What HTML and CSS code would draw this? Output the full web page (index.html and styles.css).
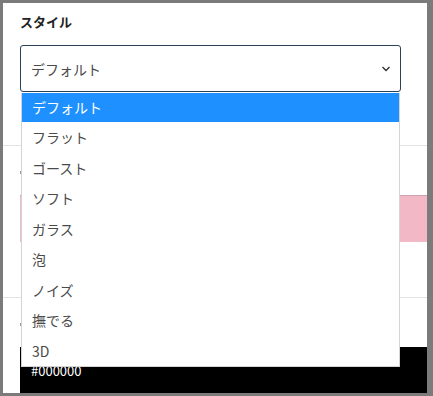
FILE: index.html
```html
<!DOCTYPE html>
<html lang="ja">
<head>
<meta charset="UTF-8">
<meta name="viewport" content="width=device-width, initial-scale=1.0">
<title>スタイル</title>
<link rel="stylesheet" href="styles.css">
</head>
<body>
<div class="frame">
    <div class="top">
        <h2 class="title">スタイル</h2>
        <div class="select">
            <span>デフォルト</span>
            <svg class="chev" width="10" height="6" viewBox="0 0 10 6"><polyline points="1.5,1 5,4.5 8.5,1" fill="none" stroke="#333" stroke-width="1.4"/></svg>
        </div>
    </div>

    <div class="section">
        <div class="mark"></div>
        <div class="swatch pink"></div>
    </div>

    <div class="section">
        <div class="mark"></div>
        <div class="swatch black">#000000</div>
    </div>

    <ul class="menu">
        <li class="active">デフォルト</li>
        <li>フラット</li>
        <li>ゴースト</li>
        <li>ソフト</li>
        <li>ガラス</li>
        <li>泡</li>
        <li>ノイズ</li>
        <li>撫でる</li>
        <li>3D</li>
    </ul>
</div>
</body>
</html>
```

FILE: styles.css
```css
body {
    margin: 0;
    background-color: #7b7b7b;
    font-family: "Noto Sans CJK JP", "Noto Sans", sans-serif;
}

.frame {
    position: relative;
    margin: 3px 6px 3px 3px;
    height: 390px;
    background-color: #fff;
    overflow: hidden;
}

.top {
    padding: 9px 0 53px 17px;
}

.title {
    margin: 0 0 13px;
    font-size: 13px;
    line-height: 20px;
    font-weight: bold;
    color: #222;
}

.select {
    display: flex;
    align-items: center;
    justify-content: space-between;
    width: 381px;
    height: 47px;
    box-sizing: border-box;
    padding: 0 9px 0 10px;
    border: 1.5px solid #2b4157;
    border-radius: 3px;
    font-size: 14px;
    color: #4a4a4a;
}

.section {
    border-top: 1px solid #e2e2e2;
    padding: 25px 0 0 17px;
    height: 152px;
    box-sizing: border-box;
}

.mark {
    width: 2px;
    height: 3px;
    background-color: #999;
}

.swatch {
    margin-top: 21px;
    width: 420px;
    height: 47px;
    box-sizing: border-box;
}

.pink {
    background-color: #f3b8c6;
    border-top: 1px solid #c9a3ad;
}

.black {
    background-color: #000;
    color: #fff;
    font-size: 13px;
    padding: 15px 11px;
    line-height: 18px;
}

.menu {
    position: absolute;
    top: 90px;
    left: 18px;
    width: 379px;
    margin: 0;
    padding: 0;
    list-style: none;
    background-color: #fff;
    border: 1px solid #d4d4d4;
    border-top: none;
    box-sizing: border-box;
}

.menu li {
    height: 30.5px;
    line-height: 30px;
    padding-left: 10px;
    font-size: 14px;
    color: #4a4a4a;
}

.menu li.active {
    background-color: #1e90ff;
    color: #fff;
    height: 29px;
    line-height: 29px;
}
```
